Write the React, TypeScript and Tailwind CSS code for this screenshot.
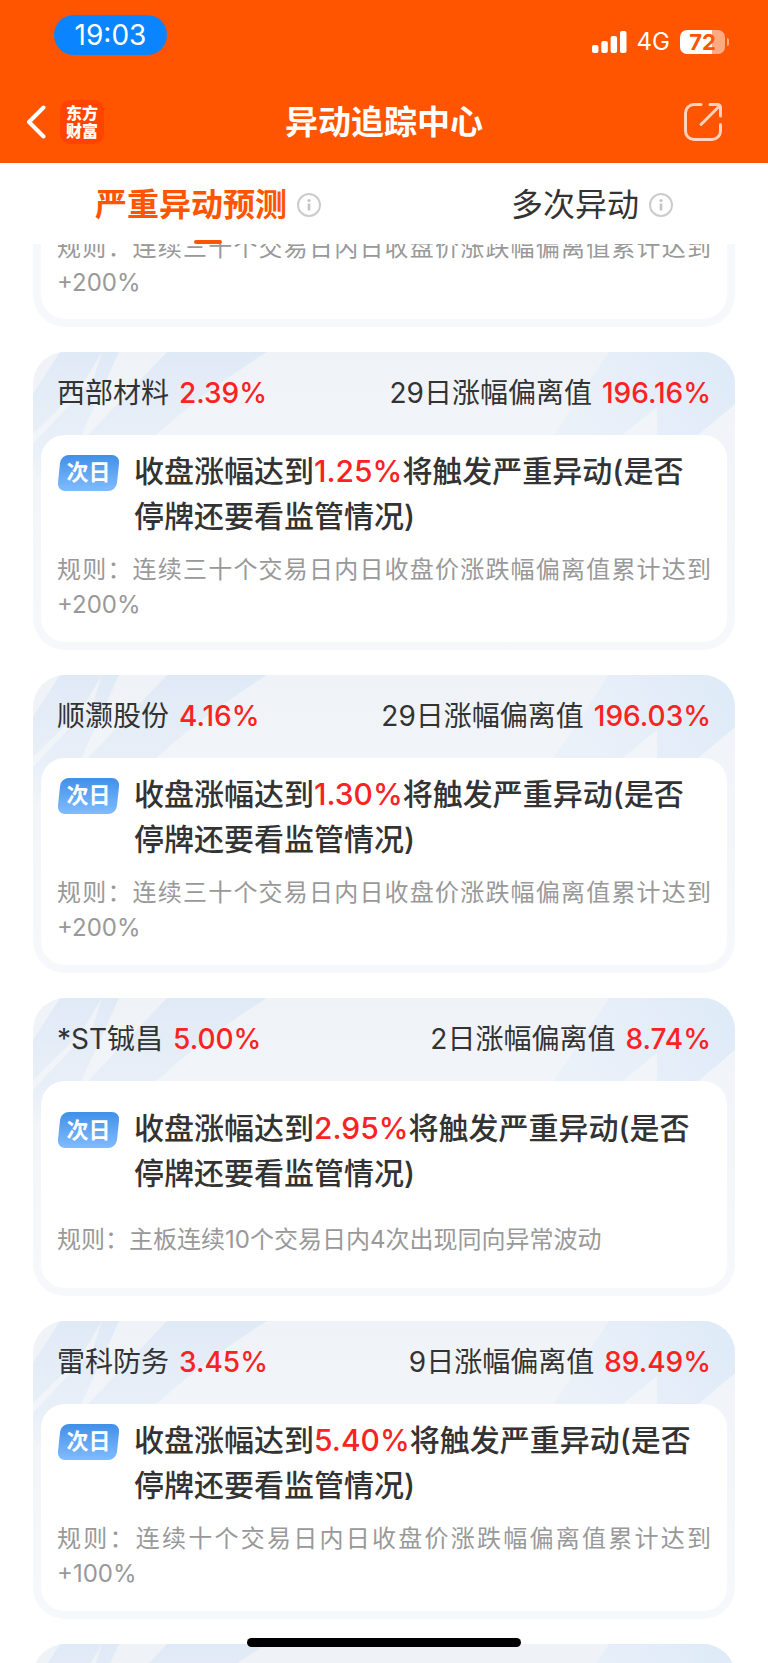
import React from "react";

type Stock = {
  name: string;
  change: string;
  days: number;
  deviation: string;
  trigger: string;
  rule: string;
};

const stocks: Stock[] = [
  { name: "西部材料", change: "2.39%", days: 29, deviation: "196.16%", trigger: "1.25%", rule: "规则：连续三十个交易日内日收盘价涨跌幅偏离值累计达到+200%" },
  { name: "顺灏股份", change: "4.16%", days: 29, deviation: "196.03%", trigger: "1.30%", rule: "规则：连续三十个交易日内日收盘价涨跌幅偏离值累计达到+200%" },
  { name: "*ST铖昌", change: "5.00%", days: 2, deviation: "8.74%", trigger: "2.95%", rule: "规则：主板连续10个交易日内4次出现同向异常波动" },
  { name: "雷科防务", change: "3.45%", days: 9, deviation: "89.49%", trigger: "5.40%", rule: "规则：连续十个交易日内日收盘价涨跌幅偏离值累计达到+100%" },
];

function StatusBar() {
  return (
    <div className="flex h-[78px] items-start justify-between pl-[54px] pr-[39px]">
      <div className="mt-[15px] flex h-10 w-[113px] items-center justify-center rounded-full bg-[#0b84ff] text-[28px] leading-10">
        19:03
      </div>
      <div className="mt-[30px] flex h-6 items-center gap-[10px]">
        <svg width="35" height="22" viewBox="0 0 35 22" fill="#fff" aria-hidden="true">
          <rect x="0" y="14" width="6.5" height="8" rx="2" />
          <rect x="9.3" y="10" width="6.5" height="12" rx="2" />
          <rect x="18.6" y="5" width="6.5" height="17" rx="2" />
          <rect x="28" y="0" width="6.5" height="22" rx="2" />
        </svg>
        <span className="text-[24px] leading-6">4G</span>
        <div className="flex items-center gap-[2px]">
          <div className="flex h-6 w-[45px] items-center justify-center rounded-[7px] bg-linear-to-r from-white from-72% to-[#ffaa80] to-72% text-[22px] font-bold leading-6 text-[#ff5500]">
            72
          </div>
          <div className="h-2 w-[2px] rounded-r-full bg-[#ffaa80]" />
        </div>
      </div>
    </div>
  );
}

function NavBar() {
  return (
    <div className="grid h-[85px] grid-cols-[1fr_auto_1fr] items-center px-[26px] pt-[3px]">
      <div className="flex items-center gap-[14px]">
        <button type="button" aria-label="返回">
          <svg width="20" height="34" viewBox="0 0 20 34" fill="none" stroke="#fff" strokeWidth="4" strokeLinecap="round" strokeLinejoin="round">
            <path d="M17.5 2.5 3 17l14.500 14.500" />
          </svg>
        </button>
        <a href="#home" className="flex size-11 flex-col items-center justify-center rounded-[10px] bg-[#ff4400] text-[16px] font-black leading-[18px]">
          <span>东方</span>
          <span>财富</span>
        </a>
      </div>
      <h1 className="text-[33px] font-bold leading-10">异动追踪中心</h1>
      <button type="button" aria-label="分享" className="mr-[19px] justify-self-end">
        <svg width="40" height="40" viewBox="0 0 40 40" fill="none" stroke="#ffd3bd" strokeWidth="3" strokeLinecap="round" strokeLinejoin="round">
          <path d="M18 2.500H11a8.500 8.500 0 0 0-8.500 8.500v18A8.500 8.500 0 0 0 11 37.500h18a8.500 8.500 0 0 0 8.500-8.500V22.500" />
          <path d="M27 2.500h7.500a3 3 0 0 1 3 3v8.500M18 22.500 36.500 4" />
        </svg>
      </button>
    </div>
  );
}

function InfoIcon() {
  return (
    <svg width="24" height="24" viewBox="0 0 24 24" fill="none" aria-hidden="true">
      <circle cx="12" cy="12" r="11" stroke="#cccccc" strokeWidth="2" />
      <circle cx="12" cy="7.500" r="1.600" fill="#c4c4c4" />
      <path d="M12 10.500v7" stroke="#c4c4c4" strokeWidth="2.600" />
    </svg>
  );
}

function Tabs() {
  return (
    <nav className="flex h-[81px] shrink-0 items-stretch justify-between bg-white px-[95px] text-[32px]">
      <button type="button" className="flex flex-col items-center justify-between text-[#ff5500]">
        <span className="flex items-center gap-[10px] pt-[18px] font-bold leading-[48px]">
          严重异动预测
          <InfoIcon />
        </span>
        <span className="h-1 w-7 rounded-full bg-[#ff5500]" />
      </button>
      <button type="button" className="flex items-start text-[#333333]">
        <span className="flex items-center gap-[10px] pt-[18px] leading-[48px]">
          多次异动
          <InfoIcon />
        </span>
      </button>
    </nav>
  );
}

function CardPattern() {
  return (
    <div className="absolute inset-x-0 top-0 flex justify-between" aria-hidden="true">
      <svg width="240" height="140" viewBox="0 0 240 140">
        <defs>
          <linearGradient id="bandLeft" gradientUnits="userSpaceOnUse" x1="0" y1="0" x2="0" y2="130">
            <stop offset="0" stopColor="#e0eaf6" />
            <stop offset="0.65" stopColor="#e8eff8" />
            <stop offset="1" stopColor="#f1f5f9" />
          </linearGradient>
        </defs>
        <path d="M27 0H69L48 35 0 82V42z" fill="url(#bandLeft)" />
        <path d="M69 0H86L47 86 0 130V92L60 28z" fill="url(#bandLeft)" />
        <path d="M134 0H234Q170 40 122 84H54z" fill="url(#bandLeft)" />
      </svg>
      <svg width="200" height="120" viewBox="0 0 200 120">
        <defs>
          <linearGradient id="bandRight" gradientUnits="userSpaceOnUse" x1="200" y1="0" x2="60" y2="100">
            <stop offset="0" stopColor="#deeaf8" />
            <stop offset="1" stopColor="#ebf1f9" />
          </linearGradient>
        </defs>
        <path d="M74 0H200V52L162 84H122V55L86 84H18z" fill="url(#bandRight)" />
      </svg>
    </div>
  );
}

function Rule({ children }: { children: string }) {
  return <p className="text-justify text-[24px] leading-[35px] text-[#999999]">{children}</p>;
}

function StockCard({ stock }: { stock: Stock }) {
  return (
    <article className="relative overflow-hidden rounded-[32px] bg-linear-to-b from-[#eff3f8] to-[#f7f8fb] px-2 pb-2">
      <CardPattern />
      <header className="relative flex h-[83px] items-center justify-between px-4 pb-[2px] text-[28px] leading-10 text-[#333333]">
        <h2 className="flex gap-[10px]">
          {stock.name}
          <span className="font-medium text-[#fa2222]">{stock.change}</span>
        </h2>
        <p className="flex gap-[10px]">
          {stock.days}日涨幅偏离值
          <span className="font-medium text-[#fa2222]">{stock.deviation}</span>
        </p>
      </header>
      <div className="relative flex min-h-[207px] flex-col justify-evenly rounded-[24px] bg-white px-4 pb-[6px]">
        <div className="flex items-start gap-[14px]">
          <span className="relative isolate mt-[6px] flex h-9 w-[63px] shrink-0 items-center justify-center text-[22px] font-bold text-white">
            <span className="absolute inset-x-[2px] inset-y-0 -z-10 -skew-x-6 rounded-[8px] bg-linear-to-b from-[#3f90e8] to-[#80bbff]" />
            次日
          </span>
          <p className="text-[30px] font-medium leading-[45px] text-[#333333]">
            收盘涨幅达到<span className="text-[#fa2222]">{stock.trigger}</span>将触发严重异动(是否停牌还要看监管情况)
          </p>
        </div>
        <Rule>{stock.rule}</Rule>
      </div>
    </article>
  );
}

export default function App() {
  return (
    <div className="flex h-screen flex-col overflow-hidden bg-white font-['Inter','Noto_Sans_CJK_SC',sans-serif]">
      <header className="shrink-0 bg-[#ff5500] text-white">
        <StatusBar />
        <NavBar />
      </header>
      <Tabs />
      <main className="min-h-0 flex-1 overflow-hidden px-[33px]">
        <div className="-mt-[14px] flex flex-col gap-[25px]">
          <article className="rounded-b-[32px] bg-[#f6f8fb] px-2 pb-2">
            <div className="rounded-b-[24px] bg-white px-4 pb-[19px]">
              <Rule>规则：连续三十个交易日内日收盘价涨跌幅偏离值累计达到+200%</Rule>
            </div>
          </article>
          {stocks.map((stock) => (
            <StockCard key={stock.name} stock={stock} />
          ))}
          <article className="relative h-[298px] shrink-0 overflow-hidden rounded-[32px] bg-[#eff3f8]">
            <CardPattern />
          </article>
        </div>
      </main>
      <div className="fixed bottom-4 left-1/2 h-[9px] w-[274px] -translate-x-1/2 rounded-full bg-black" />
    </div>
  );
}
